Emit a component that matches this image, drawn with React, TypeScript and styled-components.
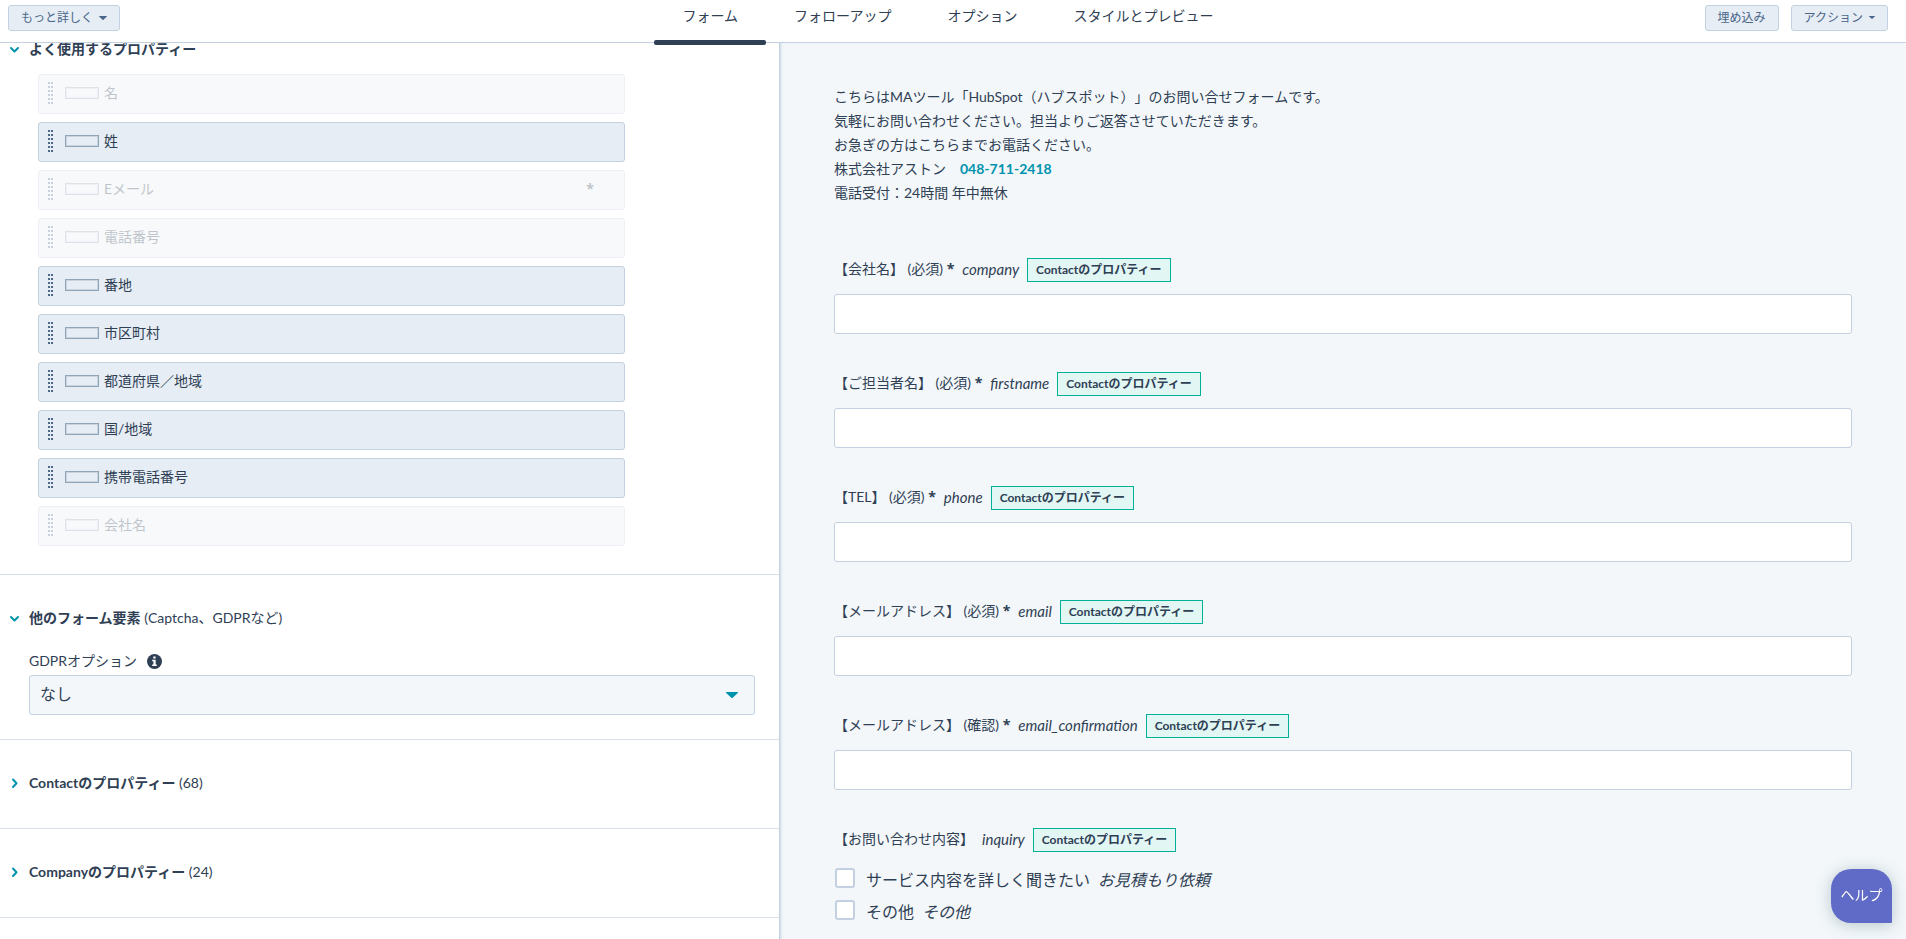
import React from "react";
import styled, { createGlobalStyle } from "styled-components";

const color = {
  text: "#2f4054",
  button: "#4a6689",
  line: "#c3d0df",
  divider: "#d9e0e9",
  panel: "#f3f7fa",
  row: "#e6edf5",
  teal: "#0093ad",
  white: "#ffffff",
};

const GlobalStyle = createGlobalStyle`
  *, *::before, *::after { box-sizing: border-box; }
  body {
    margin: 0;
    background: ${color.white};
    color: ${color.text};
    font: 400 14px/24px Lato, "Noto Sans CJK JP", sans-serif;
    text-spacing-trim: space-all;
  }
  button, input, select { font: inherit; color: inherit; margin: 0; }
`;

const Page = styled.div`
  height: 100vh;
  display: flex;
  flex-direction: column;
  overflow: hidden;
`;

const Header = styled.header`
  display: grid;
  grid-template-columns: 1fr auto 1fr;
  align-items: start;
  height: 43px;
  flex: none;
  padding: 0 18px 0 8px;
  border-bottom: 1px solid ${color.line};
  background: ${color.white};
`;

const Actions = styled.div<{ $end?: boolean }>`
  display: flex;
  gap: 12px;
  padding-top: 5px;
  justify-content: ${(p) => (p.$end ? "flex-end" : "flex-start")};
`;

const SmallButton = styled.button`
  display: inline-flex;
  align-items: center;
  gap: 6px;
  height: 26px;
  padding: 0 12px 1px;
  border: 1px solid ${color.line};
  border-radius: 3px;
  background: ${color.row};
  color: ${color.button};
  font-size: 12px;
  line-height: 22px;
  white-space: nowrap;
  cursor: pointer;
`;

const Tabs = styled.nav`
  display: flex;
  align-self: stretch;
`;

const Tab = styled.a<{ $active?: boolean }>`
  position: relative;
  padding: 4px 28px 0;
  color: inherit;
  text-decoration: none;
  white-space: nowrap;
  &::after {
    content: "";
    display: ${(p) => (p.$active ? "block" : "none")};
    position: absolute;
    z-index: 1;
    left: 0;
    right: 0;
    bottom: -3px;
    height: 5px;
    border-radius: 2px;
    background: ${color.text};
  }
`;

const Body = styled.div`
  flex: 1;
  min-height: 0;
  display: grid;
  grid-template-columns: minmax(0, 780fr) minmax(0, 1126fr);
`;

const Sidebar = styled.aside`
  overflow: hidden;
  border-right: 1px solid ${color.line};
`;

const Section = styled.section<{ $scrolled?: boolean }>`
  margin-top: ${(p) => (p.$scrolled ? "-37px" : "0")};
  padding: 31px 24px 0 29px;
  border-bottom: 1px solid ${color.divider};
`;

const SectionTitle = styled.h2`
  margin: 0 0 0 -20px;
  padding-bottom: 33px;
  font-size: 14px;
  line-height: 24px;
  font-weight: 400;
`;

const OpenTitle = styled(SectionTitle)`
  padding-bottom: 13px;
`;

const Toggle = styled.button`
  display: flex;
  align-items: center;
  gap: 8px;
  padding: 0;
  border: 0;
  background: none;
  cursor: pointer;
  svg { flex: none; }
`;

const PropertyList = styled.ul`
  display: flex;
  flex-direction: column;
  gap: 8px;
  max-width: 596px;
  margin: 0;
  padding: 0 0 28px 9px;
  list-style: none;
`;

const PropertyRow = styled.li<{ $used?: boolean }>`
  display: flex;
  align-items: center;
  height: 40px;
  padding: 0 30px 2px 9px;
  border: 1px solid ${color.line};
  border-radius: 3px;
  background: ${color.row};
  opacity: ${(p) => (p.$used ? 0.3 : 1)};
`;

const FieldGlyph = styled.span`
  width: 34px;
  height: 12px;
  margin: 0 5px 0 12px;
  border: 1px solid #90a4b8;
  box-shadow: inset 0 0 0 1px #c9d4e0;
`;

const Star = styled.b`
  font-family: "Open Sans", sans-serif;
`;

const RowStar = styled(Star)`
  margin-left: auto;
`;

const SettingLabel = styled.div`
  display: flex;
  align-items: center;
  gap: 10px;
  margin-top: 6px;
  padding-bottom: 2px;
`;

const SelectWrap = styled.div`
  position: relative;
  margin-bottom: 24px;
  svg {
    position: absolute;
    right: 17px;
    top: 17px;
    pointer-events: none;
  }
`;

const Select = styled.select`
  display: block;
  width: 100%;
  height: 40px;
  padding: 0 40px 2px 10px;
  border: 1px solid ${color.line};
  border-radius: 3px;
  background: ${color.panel};
  font-size: 16px;
  appearance: none;
`;

const Preview = styled.main`
  overflow: hidden;
  padding: 42px 54px 0;
  background: ${color.panel};
  box-shadow: inset 3px 0 3px -2px #cdd9e5;
`;

const Intro = styled.p`
  margin: 0 0 53px;
`;

const PhoneLink = styled.a`
  color: ${color.teal};
  font-weight: 700;
  text-decoration: none;
`;

const Field = styled.div`
  margin-bottom: 38px;
`;

const FieldHead = styled.div`
  display: flex;
  align-items: flex-start;
  gap: 8px;
  margin-bottom: 12px;
  line-height: 22px;
`;

const FieldName = styled.em`
  font-size: 15px;
`;

const Choices = styled.fieldset`
  margin: 0;
  padding: 0;
  border: 0;
`;

const Badge = styled.span`
  height: 24px;
  padding: 0 8px;
  border: 1px solid #00b097;
  background: #e2f6f4;
  font-size: 12px;
  font-weight: 700;
`;

const TextInput = styled.input`
  display: block;
  width: 100%;
  height: 40px;
  padding: 0 10px;
  border: 1px solid ${color.line};
  border-radius: 3px;
  background: ${color.white};
`;

const Choice = styled.label`
  display: flex;
  align-items: center;
  gap: 8px;
  height: 32px;
  font-size: 16px;
`;

const Checkbox = styled.input`
  appearance: none;
  width: 20px;
  height: 20px;
  margin: 0 3px 4px 1px;
  border: 2px solid ${color.line};
  border-radius: 3px;
  background: ${color.white};
`;

const HelpButton = styled.button`
  position: fixed;
  right: 14px;
  bottom: 16px;
  width: 61px;
  height: 54px;
  padding: 0 0 2px;
  border: 0;
  border-radius: 20px 20px 1px 20px;
  background: #5f6bc6;
  box-shadow: 0 2px 16px rgba(45, 90, 100, 0.3);
  color: ${color.white};
  cursor: pointer;
`;

const Caret = ({ size = 6, fill = "currentColor" }: { size?: number; fill?: string }) => (
  <svg width={size} height={size / 2} viewBox="0 0 12 6" fill={fill} aria-hidden="true">
    <path d="M0.6 0h10.8c.6 0 .8.5.4.9L6.7 5.700a1 1 0 0 1-1.400 0L.2.9C-.2.5 0 0 .6 0z" />
  </svg>
);

const Chevron = ({ open }: { open?: boolean }) => (
  <svg width="12" height="12" viewBox="0 0 12 12" fill="none" stroke={color.teal} strokeWidth="2" strokeLinecap="round" strokeLinejoin="round" aria-hidden="true">
    <path d={open ? "M2 5l3.500 3.500L9 5" : "M4 2.500L7.500 6.200L4 10"} />
  </svg>
);

const Grip = () => (
  <svg width="5" height="22" fill={color.button} aria-hidden="true">
    {[0, 4, 8, 12, 16, 20].map((y) => (
      <React.Fragment key={y}>
        <rect x="0" y={y} width="2" height="2" />
        <rect x="3" y={y} width="2" height="2" />
      </React.Fragment>
    ))}
  </svg>
);

const InfoIcon = () => (
  <svg width="15" height="15" viewBox="0 0 15 15" aria-hidden="true">
    <circle cx="7.5" cy="7.5" r="7.500" fill={color.text} />
    <path fill="#fff" d="M6.300 2.600h2.300v2H6.300zM5.200 5.800h3.500v4.700h1.100v1.500H5.200v-1.500h1.200V7.300H5.200z" />
  </svg>
);

const properties = [
  { name: "名", used: true },
  { name: "姓" },
  { name: "Eメール", used: true, required: true },
  { name: "電話番号", used: true },
  { name: "番地" },
  { name: "市区町村" },
  { name: "都道府県／地域" },
  { name: "国/地域" },
  { name: "携帯電話番号" },
  { name: "会社名", used: true },
];

const fields = [
  { id: "company", label: "【会社名】 (必須)" },
  { id: "firstname", label: "【ご担当者名】 (必須)" },
  { id: "phone", label: "【TEL】 (必須)" },
  { id: "email", label: "【メールアドレス】 (必須)" },
  { id: "email_confirmation", label: "【メールアドレス】 (確認)" },
];

const choices = [
  { label: "サービス内容を詳しく聞きたい", value: "お見積もり依頼" },
  { label: "その他", value: "その他" },
];

export default function App() {
  return (
    <>
      <GlobalStyle />
      <Page>
        <Header>
          <Actions>
            <SmallButton>もっと詳しく<Caret size={8} /></SmallButton>
          </Actions>
          <Tabs>
            <Tab href="#form" $active>フォーム</Tab>
            <Tab href="#followup">フォローアップ</Tab>
            <Tab href="#options">オプション</Tab>
            <Tab href="#style">スタイルとプレビュー</Tab>
          </Tabs>
          <Actions $end>
            <SmallButton>埋め込み</SmallButton>
            <SmallButton>アクション<Caret /></SmallButton>
          </Actions>
        </Header>
        <Body>
          <Sidebar>
            <Section $scrolled>
              <OpenTitle>
                <Toggle aria-expanded="true"><Chevron open /><b>よく使用するプロパティー</b></Toggle>
              </OpenTitle>
              <PropertyList>
                {properties.map((p) => (
                  <PropertyRow key={p.name} $used={p.used}>
                    <Grip />
                    <FieldGlyph />
                    {p.name}
                    {p.required && <RowStar>*</RowStar>}
                  </PropertyRow>
                ))}
              </PropertyList>
            </Section>
            <Section>
              <OpenTitle>
                <Toggle aria-expanded="true">
                  <Chevron open />
                  <span><b>他のフォーム要素</b> (Captcha、GDPRなど)</span>
                </Toggle>
              </OpenTitle>
              <SettingLabel>
                <label htmlFor="gdpr">GDPRオプション</label>
                <InfoIcon />
              </SettingLabel>
              <SelectWrap>
                <Select id="gdpr"><option>なし</option></Select>
                <Caret size={12} fill={color.teal} />
              </SelectWrap>
            </Section>
            <Section>
              <SectionTitle>
                <Toggle aria-expanded="false"><Chevron /><span><b>Contactのプロパティー</b> (68)</span></Toggle>
              </SectionTitle>
            </Section>
            <Section>
              <SectionTitle>
                <Toggle aria-expanded="false"><Chevron /><span><b>Companyのプロパティー</b> (24)</span></Toggle>
              </SectionTitle>
            </Section>
          </Sidebar>
          <Preview>
            <Intro>
              こちらはMAツール「HubSpot（ハブスポット）」のお問い合せフォームです。<br />
              気軽にお問い合わせください。担当よりご返答させていただきます。<br />
              お急ぎの方はこちらまでお電話ください。<br />
              株式会社アストン　<PhoneLink href="tel:048-711-2418">048-711-2418</PhoneLink><br />
              電話受付：24時間 年中無休
            </Intro>
            {fields.map((f) => (
              <Field key={f.id}>
                <FieldHead>
                  <label htmlFor={f.id}>{f.label} <Star>*</Star></label>
                  <FieldName>{f.id}</FieldName>
                  <Badge>Contactのプロパティー</Badge>
                </FieldHead>
                <TextInput id={f.id} type="text" />
              </Field>
            ))}
            <Choices aria-labelledby="inquiry-label">
              <FieldHead>
                <span id="inquiry-label">【お問い合わせ内容】</span>
                <FieldName>inquiry</FieldName>
                <Badge>Contactのプロパティー</Badge>
              </FieldHead>
              {choices.map((c) => (
                <Choice key={c.label}>
                  <Checkbox type="checkbox" />
                  <span>{c.label}</span>
                  <em>{c.value}</em>
                </Choice>
              ))}
            </Choices>
          </Preview>
        </Body>
        <HelpButton>ヘルプ</HelpButton>
      </Page>
    </>
  );
}
